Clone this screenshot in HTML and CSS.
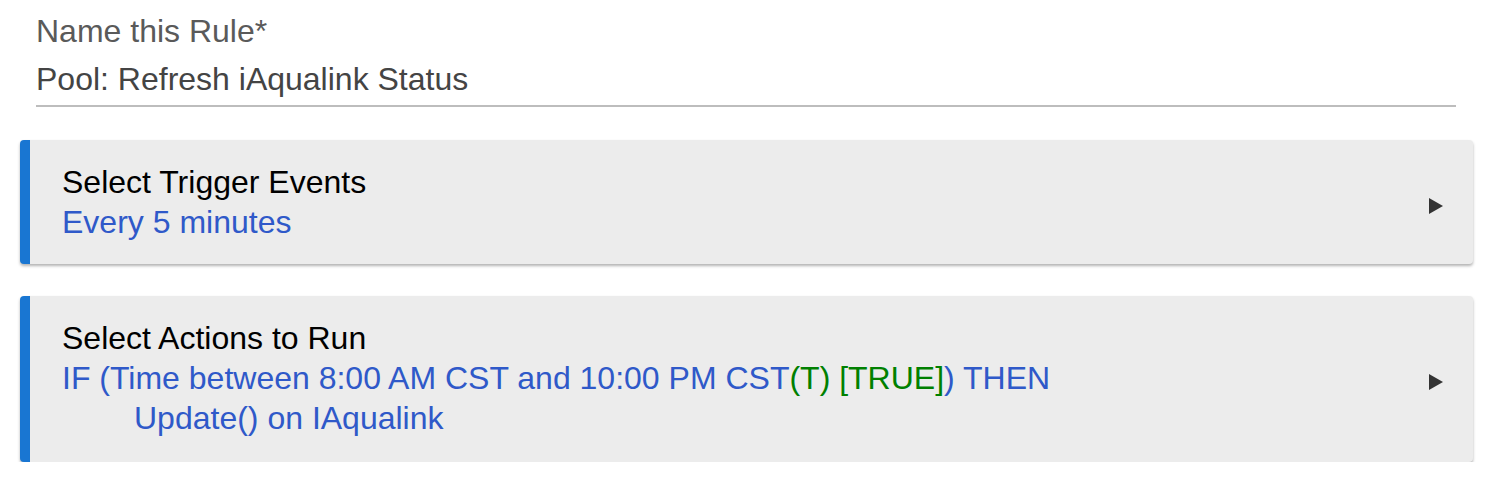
FILE: index.html
```html
<!DOCTYPE html>
<html>
<head>
    <title>Rule Machine</title>
    <link rel="stylesheet" href="styles.css">
</head>
<body>
    <div class="field">
        <div class="field-label">Name this Rule*</div>
        <div class="field-value">Pool: Refresh iAqualink Status</div>
    </div>

    <div class="section">
        <div class="section-body">
            <div class="section-title">Select Trigger Events</div>
            <div class="desc">Every 5 minutes</div>
        </div>
        <span class="arrow"></span>
    </div>

    <div class="section actions">
        <div class="section-body">
            <div class="section-title">Select Actions to Run</div>
            <div class="desc">IF (Time between 8:00 AM CST and 10:00 PM CST<span class="ok">(T) [TRUE]</span>) THEN</div>
            <div class="desc indent">Update() on IAqualink</div>
        </div>
        <span class="arrow"></span>
    </div>
</body>
</html>
```

FILE: styles.css
```css
body {
    margin: 0;
    background-color: #fff;
    font-family: "Liberation Sans", Arial, sans-serif;
    font-size: 32px;
    line-height: 40px;
}
.field {
    margin: 0 38px 0 36px;
    padding: 11px 0 6px;
    border-bottom: 2px solid #bdbdbd;
}
.field-label {
    color: #5a5a5a;
    margin-bottom: 8px;
}
.field-value {
    color: #444;
}
.section {
    display: flex;
    align-items: center;
    margin: 33px 21px 0 20px;
    padding: 22px 30px 22px 32px;
    background-color: #ececec;
    border-left: 10px solid #1976d2;
    border-radius: 4px;
    box-shadow: 0 2px 3px rgba(0, 0, 0, 0.3);
}
.section.actions {
    margin-top: 32px;
    padding-bottom: 24px;
}
.section-body {
    flex: 1;
}
.section-title {
    color: #000;
}
.desc {
    color: #2f59c9;
}
.indent {
    padding-left: 72px;
}
.ok {
    color: #008000;
}
.arrow {
    width: 0;
    height: 0;
    margin-top: 8px;
    border-top: 8px solid transparent;
    border-bottom: 8px solid transparent;
    border-left: 14px solid #333;
}
```
